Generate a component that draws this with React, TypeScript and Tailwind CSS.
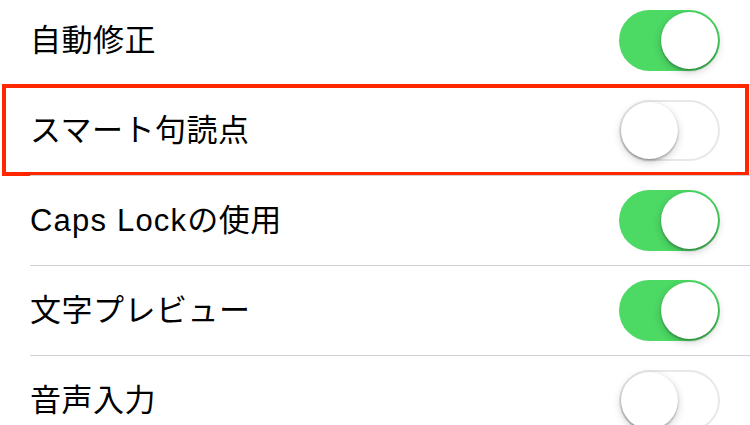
import { useState } from "react";

interface ToggleProps {
  on: boolean;
  onChange: () => void;
}

function Toggle({ on, onChange }: ToggleProps) {
  return (
    <button
      onClick={onChange}
      className={
        "relative h-[61px] w-[101px] shrink-0 rounded-full transition-colors " +
        (on ? "bg-[#4cd964]" : "bg-white shadow-[inset_0_0_0_2px_#e8e8e8]")
      }
    >
      <span
        className={
          "absolute top-[2px] h-[57px] w-[57px] rounded-full bg-white shadow-[0_3px_8px_rgba(0,0,0,0.2),0_1px_2px_rgba(0,0,0,0.25),0_3px_1px_rgba(0,0,0,0.06)] transition-all " +
          (on ? "left-[42px]" : "left-[2px]")
        }
      />
    </button>
  );
}

const initial = [
  { label: "自動修正", on: true },
  { label: "スマート句読点", on: false },
  { label: "Caps Lockの使用", on: true, latin: "Caps Lock" },
  { label: "文字プレビュー", on: true },
  { label: "音声入力", on: false },
];

export default function App() {
  const [items, setItems] = useState(initial);

  const flip = (i: number) =>
    setItems((prev) => prev.map((it, j) => (j === i ? { ...it, on: !it.on } : it)));

  return (
    <div
      className="h-[425px] w-[750px] overflow-hidden bg-white text-black"
      style={{ fontFamily: '"Liberation Sans", "Noto Sans CJK JP", sans-serif' }}
    >
      <div className="-mt-[5px] flex flex-col">
        {items.map((it, i) => (
          <div key={it.label} className="relative h-[90px] pl-[30px]">
            <div
              className={
                "flex h-full items-center justify-between pr-[30px] " +
                (i > 0 ? "border-t border-[#d0d0d4]" : "")
              }
            >
              <span className="text-[31px] leading-none tracking-[0.5px]">
                {it.latin ? (
                  <>
                    <span className="tracking-[1.2px]">{it.latin}</span>
                    {it.label.slice(it.latin.length)}
                  </>
                ) : (
                  it.label
                )}
              </span>
              <Toggle on={it.on} onChange={() => flip(i)} />
            </div>
            {/* highlight frame on the second row */}
            {i === 1 && (
              <div className="pointer-events-none absolute -top-[1px] -bottom-[1px] left-[2px] right-[1px] border-4 border-[#ff2600]" />
            )}
          </div>
        ))}
      </div>
    </div>
  );
}
